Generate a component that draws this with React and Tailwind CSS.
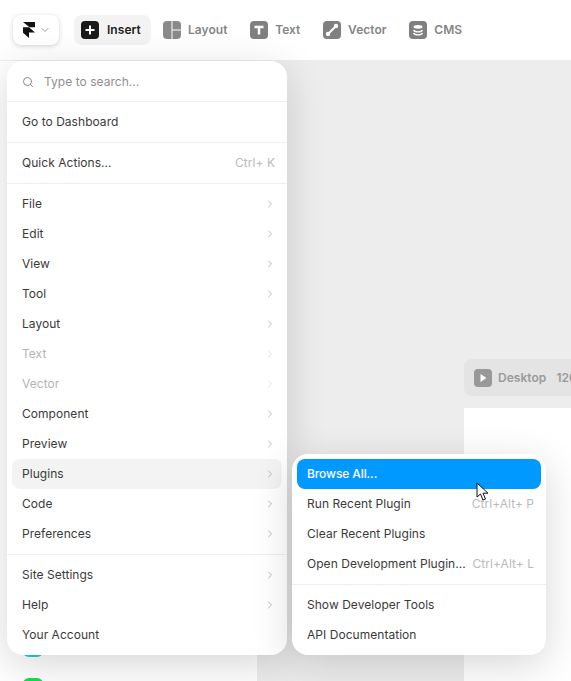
import { ChevronDown, ChevronRight, Search } from 'lucide-react';

const tools = [
    { label: 'Layout', icon: <LayoutGlyph /> },
    { label: 'Text', icon: <TextGlyph /> },
    { label: 'Vector', icon: <VectorGlyph /> },
    { label: 'CMS', icon: <CmsGlyph /> },
];

function LayoutGlyph() {
    return (
        <svg viewBox="0 0 18 18" className="h-[18px] w-[18px]">
            <path fill="#8a8a8a" d="M4 0h4.500v18H4a4 4 0 0 1-4-4V4a4 4 0 0 1 4-4Z" />
            <path fill="#8a8a8a" d="M9.500 0H14a4 4 0 0 1 4 4v4.500H9.500Z" />
            <path fill="#8a8a8a" d="M9.500 9.500H18V14a4 4 0 0 1-4 4H9.500Z" />
        </svg>
    );
}

function TextGlyph() {
    return (
        <svg viewBox="0 0 18 18" className="h-[18px] w-[18px]">
            <rect width="18" height="18" rx="4" fill="#808080" />
            <path fill="none" stroke="#fff" strokeWidth="2.400" d="M4.500 6h9M9 6v7.500" />
        </svg>
    );
}

function VectorGlyph() {
    return (
        <svg viewBox="0 0 18 18" className="h-[18px] w-[18px]">
            <rect width="18" height="18" rx="4" fill="#808080" />
            <path fill="none" stroke="#fff" strokeWidth="2" d="M5.500 12.500l7-7" />
            <circle cx="5" cy="13" r="2.200" fill="#fff" />
            <circle cx="13" cy="5" r="2.200" fill="#fff" />
        </svg>
    );
}

function CmsGlyph() {
    return (
        <svg viewBox="0 0 18 18" className="h-[18px] w-[18px]">
            <rect width="18" height="18" rx="4" fill="#808080" />
            <ellipse cx="9" cy="5.800" rx="4.500" ry="1.900" fill="#fff" />
            <path fill="none" stroke="#fff" strokeWidth="1.400" d="M4.500 9c.6 1.300 2.400 1.900 4.500 1.900s3.900-.6 4.500-1.900M4.500 12c.6 1.300 2.400 1.900 4.500 1.900s3.900-.6 4.500-1.900" />
        </svg>
    );
}

function FramerLogo() {
    return (
        <svg viewBox="0 0 12 16" className="ml-[1px] h-4 w-3">
            <path fill="#111" d="M0 0h12v5.300H6.500L0 0ZM0 5.300h6l6 5.300H6V16l-6-5.300V5.300Z" />
        </svg>
    );
}

function MenuRow({ label, shortcut, arrow, disabled, active }) {
    return (
        <div
            className={`mx-[5px] flex h-[30px] items-center justify-between rounded-lg pr-[7px] pl-2.5 ${
                active ? 'bg-[#f3f3f3]' : ''
            } ${disabled ? 'text-[#b4b4b4]' : 'text-[#3a3a3a]'}`}
        >
            <span>{label}</span>
            {shortcut ? (
                <span className="text-[#bababa]">{shortcut}</span>
            ) : null}
            {arrow ? (
                <ChevronRight
                    className={`-mr-[1px] h-3 w-3 ${disabled ? 'text-[#d4d4d4]' : 'text-[#a3a3a3]'}`}
                    strokeWidth={1.5}
                />
            ) : null}
        </div>
    );
}

function Divider({ className = '' }) {
    return <div className={`h-px bg-[#eeeeee] ${className}`} />;
}

const submenus = [
    'File',
    'Edit',
    'View',
    'Tool',
    'Layout',
    'Text',
    'Vector',
    'Component',
    'Preview',
    'Plugins',
    'Code',
    'Preferences',
];

export default function App() {
    return (
        <div className="relative h-[681px] w-[571px] overflow-hidden bg-white font-['Inter',sans-serif] text-[12px] tracking-[0.04px]">
            <header className="flex h-[61px] items-center border-b border-[#ececec] pb-[1px] pl-[13px]">
                <div className="flex h-[30px] w-[46px] items-center justify-center gap-1 rounded-lg bg-white shadow-[0_1px_5px_rgba(0,0,0,0.18)]">
                    <FramerLogo />
                    <ChevronDown className="h-3 w-3 text-[#777]" strokeWidth={1.5} />
                </div>
                <div className="ml-[15px] flex h-[30px] w-[77px] items-center gap-2 rounded-lg bg-[#f3f3f3] pl-[7px] font-semibold text-[#222]">
                    <svg viewBox="0 0 18 18" className="h-[18px] w-[18px]">
                        <rect width="18" height="18" rx="4" fill="#1a1a1a" />
                        <path fill="none" stroke="#fff" strokeWidth="2" d="M4.500 9h9M9 4.500v9" />
                    </svg>
                    Insert
                </div>
                <div className="ml-[12px] flex items-center gap-[22.7px] font-semibold text-[#858585]">
                    {tools.map((tool) => (
                        <div key={tool.label} className="flex items-center gap-[7px]">
                            {tool.icon}
                            {tool.label}
                        </div>
                    ))}
                </div>
            </header>

            <div className="flex h-[620px]">
                <aside className="w-[257px] shrink-0 bg-white pt-[576px] pl-[23px]">
                    <div className="h-5 w-5 rounded-md bg-[#1fd0d0]" />
                    <div className="mt-[21px] h-5 w-5 rounded-md bg-[#12e04a]" />
                </aside>
                <main className="flex w-[314px] flex-col overflow-hidden bg-[#ededed] pt-[298px] pl-[207px]">
                    <div className="flex h-[37px] items-center gap-[6px] rounded-l-lg bg-[#e4e4e4] pl-[10px] font-semibold whitespace-nowrap text-[#9a9a9a]">
                        <svg viewBox="0 0 18 18" className="h-[18px] w-[18px] shrink-0">
                            <rect width="18" height="18" rx="4" fill="#999" />
                            <path fill="#fff" d="M6.500 5v8l6-4Z" />
                        </svg>
                        <span>Desktop</span>
                        <span className="ml-1">120</span>
                    </div>
                    <div className="mt-[12px] flex-1 bg-white" />
                </main>
            </div>

            <div className="absolute top-[61px] left-[7px] h-[594px] w-[280px] rounded-2xl bg-white shadow-[0_10px_40px_rgba(0,0,0,0.16)]">
                <div className="flex h-10 items-center gap-2.5 pt-[1px] pl-[15px] text-[#8f8f8f]">
                    <Search className="h-3 w-3 text-[#888]" strokeWidth={2} />
                    Type to search...
                </div>
                <Divider />
                <div className="py-[5px]">
                    <MenuRow label="Go to Dashboard" />
                </div>
                <Divider />
                <div className="py-[5px]">
                    <MenuRow label="Quick Actions..." shortcut="Ctrl+ K" />
                </div>
                <Divider />
                <div className="py-[5px]">
                    {submenus.map((name) => (
                        <MenuRow
                            key={name}
                            label={name}
                            arrow
                            disabled={name === 'Text' || name === 'Vector'}
                            active={name === 'Plugins'}
                        />
                    ))}
                </div>
                <Divider />
                <div className="py-[5px]">
                    <MenuRow label="Site Settings" arrow />
                    <MenuRow label="Help" arrow />
                    <MenuRow label="Your Account" />
                </div>
            </div>

            <div className="absolute top-[454px] left-[292px] h-[201px] w-[254px] rounded-2xl bg-white shadow-[0_10px_40px_rgba(0,0,0,0.16)]">
                <div className="py-[5px]">
                    <div className="mx-[5px] flex h-[30px] items-center rounded-lg bg-[#0099ff] pl-2.5 font-medium tracking-[-0.1px] text-white">
                        Browse All...
                    </div>
                    <MenuRow label="Run Recent Plugin" shortcut="Ctrl+Alt+ P" />
                    <MenuRow label="Clear Recent Plugins" />
                    <MenuRow label="Open Development Plugin..." shortcut="Ctrl+Alt+ L" />
                </div>
                <Divider />
                <div className="py-[5px]">
                    <MenuRow label="Show Developer Tools" />
                    <MenuRow label="API Documentation" />
                </div>
            </div>

            <svg viewBox="0 0 14 20" className="absolute top-[482px] left-[476px] h-5 w-[14px]">
                <path fill="#fff" stroke="#111" strokeWidth="1" d="M1 1v14l3.500-3 2.500 6 2.500-1-2.500-5.800H12Z" />
            </svg>
        </div>
    );
}
